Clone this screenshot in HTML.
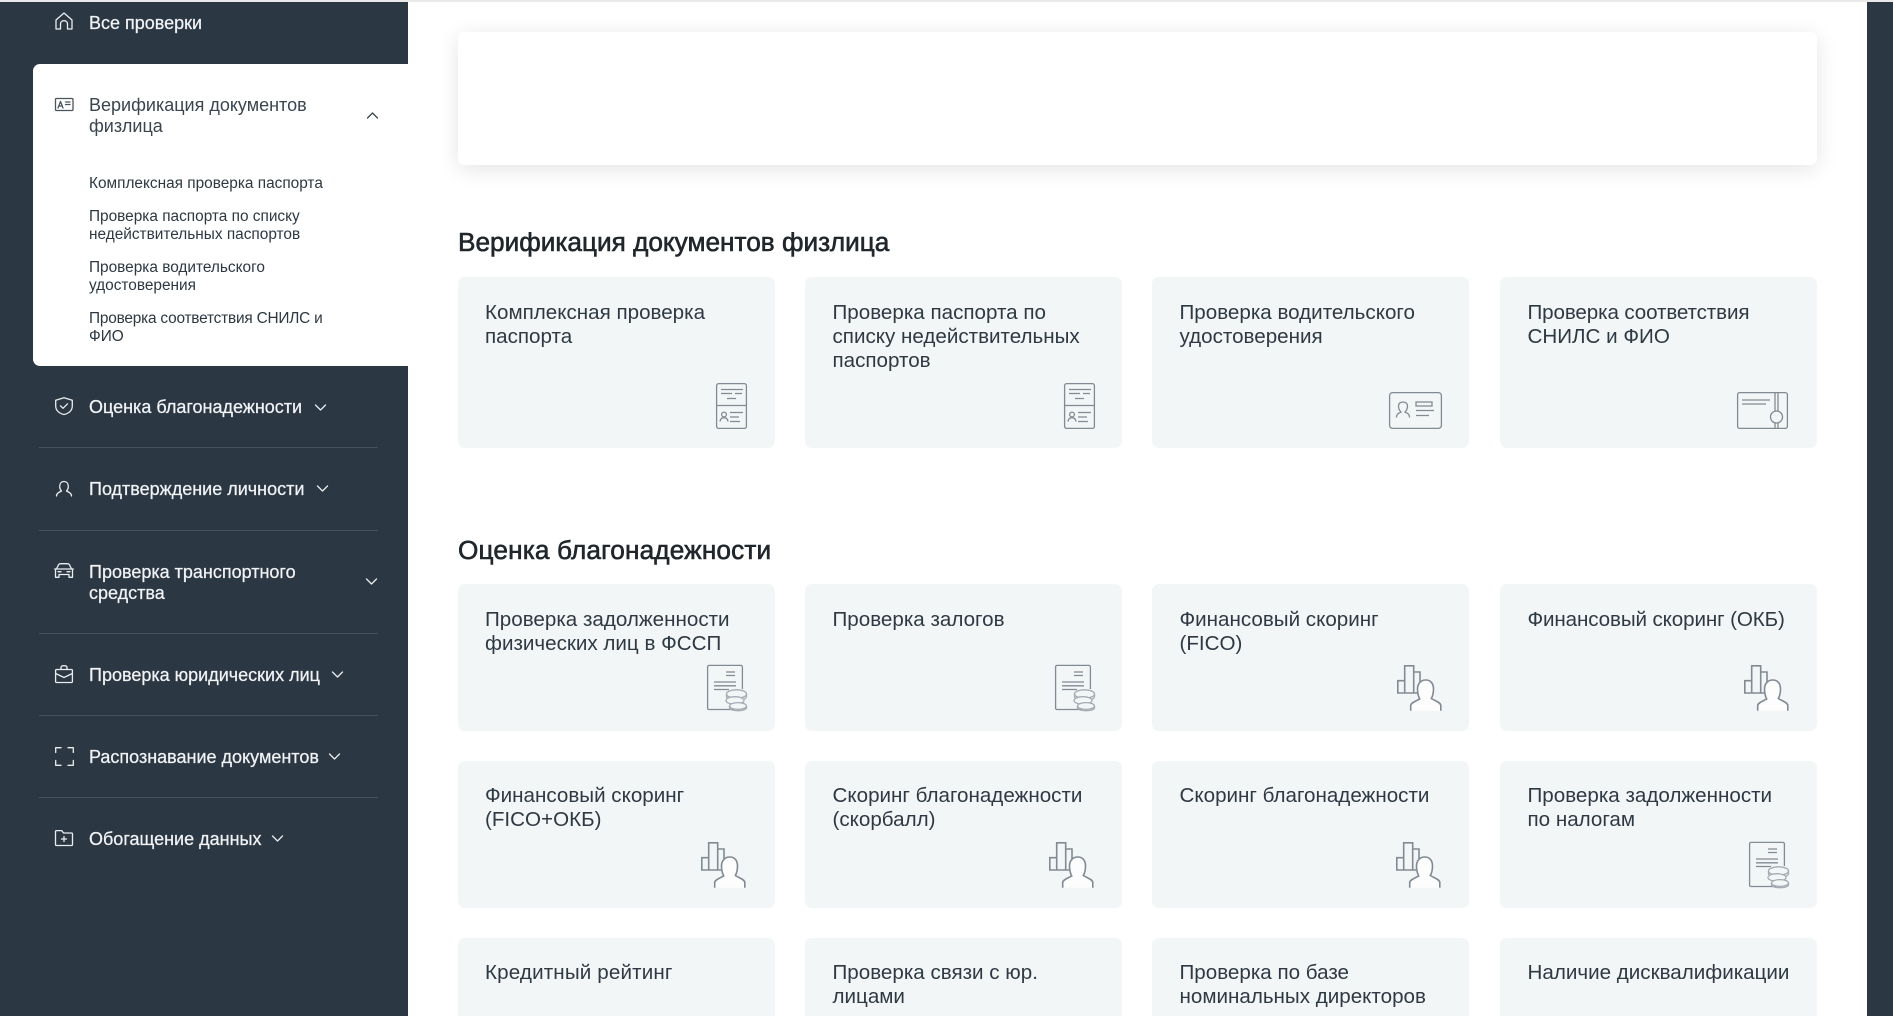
<!DOCTYPE html>
<html lang="ru"><head><meta charset="utf-8"><title>Проверки</title>
<style>
*{box-sizing:border-box;margin:0;padding:0}
html,body{width:1893px;height:1016px;overflow:hidden;background:#fff}
body{position:relative;font-family:"Liberation Sans","DejaVu Sans",sans-serif}
.a{position:absolute;white-space:nowrap}
.side{position:absolute;left:0;top:2px;width:408px;height:1014px;background:#2b3743}
.rbar{position:absolute;left:1867px;top:2px;width:26px;height:1014px;background:#2b3743}
.top{position:absolute;left:0;top:0;width:1893px;height:2px;background:#e9e9e9}
.panel{position:absolute;left:33px;top:64px;width:375px;height:302px;background:#fff;border-radius:7px 0 0 7px}
.hero{position:absolute;left:458px;top:32px;width:1359px;height:133px;background:#fff;border-radius:6px;box-shadow:0 4px 22px rgba(0,0,0,.11)}
.nav{color:#f1f3f5;font-size:18px;line-height:21px;-webkit-text-stroke:.25px #f1f3f5}
.dark{color:#3a454f;font-size:18px;line-height:21px}
.sub{color:#2d3842;font-size:15.4px;line-height:18px}
.sep{position:absolute;left:39px;width:339px;height:1px;background:#45515c}
h2{position:absolute;left:458px;font-size:26.2px;line-height:30px;font-weight:400;color:#20262b;white-space:nowrap;-webkit-text-stroke:.6px #20262b}
.c{position:absolute;width:317px;background:#f2f6f7;border-radius:7px;color:#2e3943;font-size:20.6px;line-height:24px;padding:24px 0 0 27px;white-space:nowrap;overflow:hidden}
.c svg{position:absolute}
.w1{left:458px}.w2{left:805px;padding-left:27.5px}.w3{left:1152px;padding-left:27.5px}.w4{left:1499.5px;padding-left:28px}
.h1{top:277px;height:171px}.h2{top:584px;height:147px}.h3{top:761px;height:147px;padding-top:23px}.h4{top:938px;height:78px;border-radius:7px 7px 0 0;padding-top:23px}
svg.i{position:absolute;fill:none;stroke:#e9edf0;stroke-width:1.3;stroke-linecap:round;stroke-linejoin:round;overflow:visible}
svg.ic{fill:none;stroke:#828a93;stroke-width:1.3;overflow:visible}
.ic .l{stroke:#a4abb2}
</style></head><body>
<svg width="0" height="0" style="position:absolute">
<symbol id="pass" viewBox="0 0 31 46" overflow="visible"><rect x=".6" y=".6" width="29.8" height="44.8" rx="2"/><path d="M.6 22.5H30.4"/><path class="l" d="M5 6.5H27M5 10.5H16M19 10.5H26M11 15.5H20M14 29.5H27M14 34H23M14 38.5H24"/><circle class="l" cx="8" cy="31.5" r="2.4"/><path class="l" d="M4 38.5c.4-2.7 2-3.8 4-3.8s3.6 1.1 4 3.8"/></symbol>
<symbol id="idc" viewBox="0 0 53 37" overflow="visible"><rect x=".6" y=".6" width="51.8" height="35.8" rx="3"/><path d="M7.5 25.5c0-3.5 1.800-4.200 4.500-5.500-2-2-2.500-3.500-2.500-5.500 0-3 1.800-4.500 4.500-4.500s4.500 1.500 4.500 4.500c0 2-.5 3.500-2.500 5.500 2.700 1.300 4.500 2 4.500 5.500"/><rect x="27" y="10" width="16" height="4"/><path d="M27 18.500H45M27 23.500H40"/></symbol>
<symbol id="snl" viewBox="0 0 51 37" overflow="visible"><rect x=".6" y=".6" width="49.800" height="35.800" rx="2"/><path class="l" d="M5 8H33M5 12H29"/><path d="M38 .6V19.500M41 .6V19.500M38 30.500V36.400M41 36.400V30.500"/><circle cx="39.500" cy="25" r="6"/></symbol>
<symbol id="doc" viewBox="0 0 40 46" overflow="visible"><path d="M27 44.500H2a1.400 1.400 0 0 1-1.400-1.400V1.800A1.400 1.400 0 0 1 2 .4H34a1.400 1.400 0 0 1 1.400 1.400V24"/><path class="l" d="M19 7H28M19 10.500H28M7 17H29M7 20.800H29M7 24.500H22"/><g stroke="#a4abb2"><ellipse cx="29.500" cy="29" rx="10" ry="4.200" fill="#f2f6f7"/><path d="M19.500 29v2.500c0 2 4.500 3.500 8 3.500" /><path d="M39.500 29v2.500c0 1-1 2-2.500 2.700"/><ellipse cx="28" cy="35.500" rx="9" ry="3.800" fill="#f2f6f7"/><ellipse cx="31" cy="41" rx="8.500" ry="3.400" fill="#f2f6f7"/><path d="M22.500 41v1.700c0 1.700 3.800 3 8.500 3s8.500-1.300 8.500-3V41"/></g></symbol>
<symbol id="chr" viewBox="0 0 45 46" overflow="visible"><g stroke-width="1.600"><path d="M7.700 15.700H.8V28H22M7.700 28V.8H16.700V28M16.700 7H23V17"/><path d="M13.700 45.800V40.500c0-2.500 5-4.500 9-6.500-1.500-3-2.200-6-2.200-10 0-5.500 3.500-9 8.300-9s7.700 3.500 7.700 9c0 4-.7 7-2.200 9.500 4 2.500 9.500 4 9.500 7V45.800" fill="#fdfdfd"/></g></symbol>
</svg>

<div class="top"></div>
<div class="side"></div>
<div class="rbar"></div>
<div class="panel"></div>
<div class="hero"></div>

<!-- sidebar -->
<svg class="i" style="left:55px;top:12px" width="18" height="18" viewBox="0 0 18 18"><path d="M1 17V8L9 1l8 7v9H12.500V12c0-2-1.500-3.300-3.500-3.300S5.500 10 5.500 12v5Z"/></svg>
<div class="a nav" style="left:89px;top:12.500px;">Все проверки</div>

<svg class="i" style="left:55px;top:98px;stroke:#4a545e" width="18" height="13" viewBox="0 0 18 13"><rect x=".5" y=".5" width="17.500" height="12" rx="1"/><path d="M3 10 5.500 3.500 8 10M4 8H7M10.500 4H15M10.500 6.500H15"/></svg>
<div class="a dark" style="left:89px;top:95px">Верификация документов<br>физлица</div>
<svg class="i" style="left:366.500px;top:112px;stroke:#3a454f" width="11" height="7" viewBox="0 0 11 7"><path d="M.5 6 5.500 1l5 5"/></svg>
<div class="a sub" style="left:89px;top:174.500px">Комплексная проверка паспорта</div>
<div class="a sub" style="left:89px;top:207.500px">Проверка паспорта по списку<br>недействительных паспортов</div>
<div class="a sub" style="left:89px;top:258.500px">Проверка водительского<br>удостоверения</div>
<div class="a sub" style="left:89px;top:309.500px"><span style="letter-spacing:-.2px">Проверка соответствия СНИЛС и</span><br>ФИО</div>

<svg class="i" style="left:55px;top:397px" width="18" height="18" viewBox="0 0 18 18"><path d="M9 .7 17.300 3.300V9c0 4.500-3.500 7.500-8.300 8.500C4.200 16.500.7 13.500.7 9V3.300Z"/><path d="M5.500 8.800 8 11.300l4.500-4.500"/></svg>
<div class="a nav" style="left:89px;top:396.500px">Оценка благонадежности</div>
<svg class="i" style="left:314.500px;top:404px" width="11" height="7" viewBox="0 0 11 7"><path d="M.5 1l5 5 5-5"/></svg>
<div class="sep" style="top:447px"></div>

<svg class="i" style="left:56px;top:481px" width="16" height="15" viewBox="0 0 16 15"><path d="M.5 15c0-2.500 2-3.500 5-5-1.200-1.200-1.800-2.700-1.800-4.800C3.700 2.300 5.500.5 8 .5s4.300 1.800 4.300 4.700c0 2.100-.6 3.600-1.800 4.800 3 1.500 5 2.500 5 5"/></svg>
<div class="a nav" style="left:89px;top:478.500px">Подтверждение личности</div>
<svg class="i" style="left:316.500px;top:485px" width="11" height="7" viewBox="0 0 11 7"><path d="M.5 1l5 5 5-5"/></svg>
<div class="sep" style="top:530px"></div>

<svg class="i" style="left:54px;top:563px" width="20" height="15" viewBox="0 0 20 15"><path d="M2.500 6 4.500 1.800C5 1 5.500.7 6.500.7h7c1 0 1.500.3 2 1.100l2 4.200M.7 6H19.300M1.500 6v8.300H5V11.500H15v2.800H18.500V6M4 8.700H7M13 8.700H16"/></svg>
<div class="a nav" style="left:89px;top:562px">Проверка транспортного<br>средства</div>
<svg class="i" style="left:366px;top:578px" width="11" height="7" viewBox="0 0 11 7"><path d="M.5 1l5 5 5-5"/></svg>
<div class="sep" style="top:633px"></div>

<svg class="i" style="left:55px;top:665px" width="18" height="18" viewBox="0 0 18 18"><rect x=".6" y="4.500" width="16.800" height="13" rx="1"/><path d="M6 4.500V2.500C6 1.300 7 .7 9 .7s3 .6 3 1.800v2M.6 8.500 9 12.500l8.400-4"/></svg>
<div class="a nav" style="left:89px;top:664.500px">Проверка юридических лиц</div>
<svg class="i" style="left:332px;top:671px" width="11" height="7" viewBox="0 0 11 7"><path d="M.5 1l5 5 5-5"/></svg>
<div class="sep" style="top:715px"></div>

<svg class="i" style="left:55px;top:747px" width="19" height="19" viewBox="0 0 19 19"><path d="M.7 5.500V.7H6M13 .7H18.300V5.500M.7 13.500V18.300H6M13 18.300H18.300V13.500"/></svg>
<div class="a nav" style="left:89px;top:746.500px">Распознавание документов</div>
<svg class="i" style="left:328.500px;top:753px" width="11" height="7" viewBox="0 0 11 7"><path d="M.5 1l5 5 5-5"/></svg>
<div class="sep" style="top:797px"></div>

<svg class="i" style="left:55px;top:830px" width="18" height="16" viewBox="0 0 18 16"><path d="M1.500 15.500H16.500a1 1 0 0 0 1-1V4a1 1 0 0 0-1-1H8.500L6.800.6H1.500a1 1 0 0 0-1 1V14.500a1 1 0 0 0 1 1Z"/><path d="M9 6.500V11.500M6.500 9H11.500"/></svg>
<div class="a nav" style="left:89px;top:828.500px">Обогащение данных</div>
<svg class="i" style="left:271.500px;top:835px" width="11" height="7" viewBox="0 0 11 7"><path d="M.5 1l5 5 5-5"/></svg>

<!-- content -->
<h2 style="top:227px">Верификация документов физлица</h2>
<div class="c w1 h1">Комплексная проверка<br>паспорта<svg class="ic" style="left:258px;top:106px" width="31" height="46"><use href="#pass"/></svg></div>
<div class="c w2 h1">Проверка паспорта по<br>списку недействительных<br>паспортов<svg class="ic" style="left:259px;top:106px" width="31" height="46"><use href="#pass"/></svg></div>
<div class="c w3 h1">Проверка водительского<br>удостоверения<svg class="ic" style="left:237px;top:115px" width="53" height="37"><use href="#idc"/></svg></div>
<div class="c w4 h1"><span style="letter-spacing:-.12px">Проверка соответствия</span><br>СНИЛС и ФИО<svg class="ic" style="left:237.500px;top:115px" width="51" height="37"><use href="#snl"/></svg></div>

<h2 style="top:534.500px;letter-spacing:.15px">Оценка благонадежности</h2>
<div class="c w1 h2">Проверка задолженности<br>физических лиц в ФССП<svg class="ic" style="left:249px;top:81px" width="40" height="46"><use href="#doc"/></svg></div>
<div class="c w2 h2">Проверка залогов<svg class="ic" style="left:250px;top:81px" width="40" height="46"><use href="#doc"/></svg></div>
<div class="c w3 h2">Финансовый скоринг<br>(FICO)<svg class="ic" style="left:245px;top:81px" width="45" height="46"><use href="#chr"/></svg></div>
<div class="c w4 h2"><span style="letter-spacing:-.12px">Финансовый скоринг (ОКБ)</span><svg class="ic" style="left:244.500px;top:81px" width="45" height="46"><use href="#chr"/></svg></div>

<div class="c w1 h3">Финансовый скоринг<br>(FICO+ОКБ)<svg class="ic" style="left:243px;top:81px" width="45" height="46"><use href="#chr"/></svg></div>
<div class="c w2 h3">Скоринг благонадежности<br>(скорбалл)<svg class="ic" style="left:244px;top:81px" width="45" height="46"><use href="#chr"/></svg></div>
<div class="c w3 h3">Скоринг благонадежности<svg class="ic" style="left:244px;top:81px" width="45" height="46"><use href="#chr"/></svg></div>
<div class="c w4 h3">Проверка задолженности<br>по налогам<svg class="ic" style="left:249.500px;top:81px" width="40" height="46"><use href="#doc"/></svg></div>

<div class="c w1 h4"><span style="letter-spacing:.15px">Кредитный рейтинг</span></div>
<div class="c w2 h4">Проверка связи с юр.<br>лицами</div>
<div class="c w3 h4">Проверка по базе<br>номинальных директоров</div>
<div class="c w4 h4">Наличие дисквалификации</div>
</body></html>
